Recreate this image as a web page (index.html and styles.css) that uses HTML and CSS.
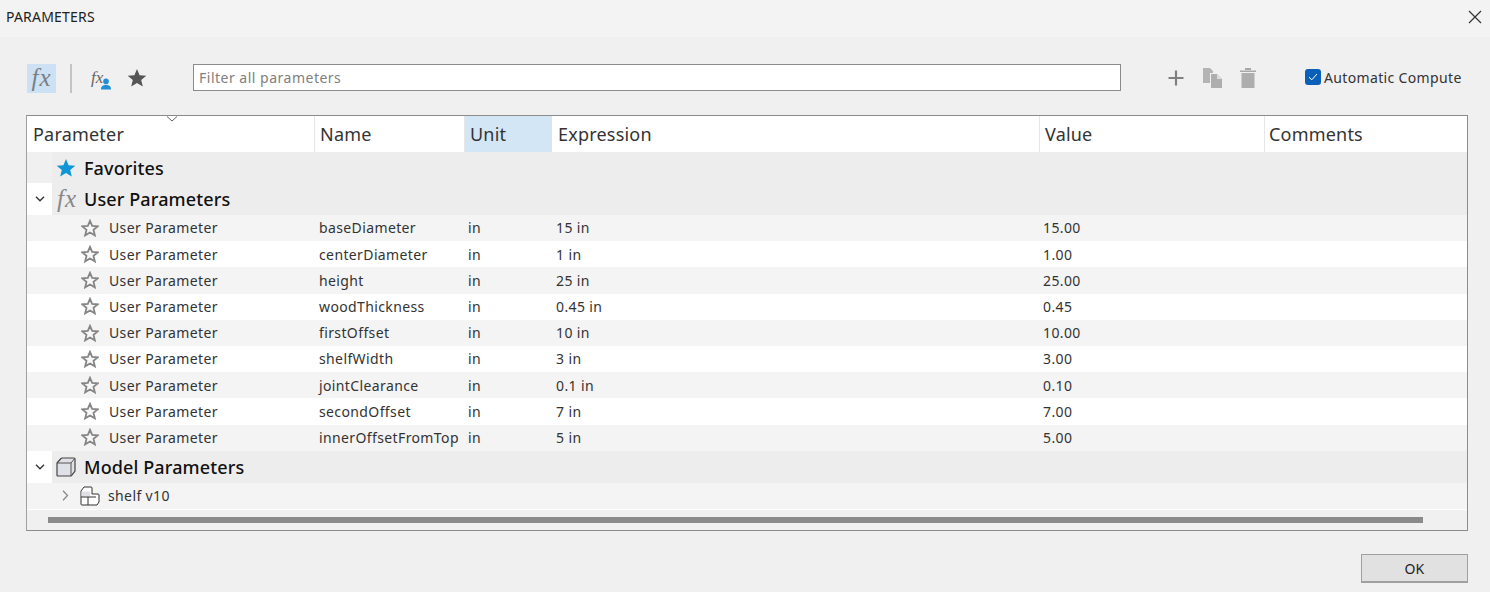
FILE: index.html
```html
<!DOCTYPE html>
<html lang="en">
  <head>
    <meta charset="UTF-8" />
    <title>Parameters</title>
    <link rel="stylesheet" href="styles.css">
  </head>
  <body>
    <div class="dialog">
      <div class="titlebar">
        <span class="title">PARAMETERS</span>
        <svg class="close" width="14" height="14" viewBox="0 0 14 14"><path d="M1 1l12 12M13 1L1 13" stroke="#333" stroke-width="1.2" fill="none"/></svg>
      </div>

      <div class="toolbar">
        <div class="fx-btn"><span class="fx">fx</span></div>
        <div class="tool-sep"></div>
        <div class="fx-user">
          <span class="fx fx-small">fx</span>
          <svg class="fx-person" width="12" height="12" viewBox="0 0 12 12"><circle cx="6" cy="3.4" r="2.8" fill="#1f8fd8"/><path d="M1 11.5c0-3.2 2-4.4 5-4.4s5 1.200 5 4.400z" fill="#1f8fd8"/></svg>
        </div>
        <svg class="star-dark" width="20" height="20" viewBox="0 0 20 20"><path d="M10 1l2.600 6.200 6.700.5-5.100 4.300 1.600 6.500L10 15l-5.800 3.500 1.600-6.500L.7 7.700l6.700-.5z" fill="#555"/></svg>
        <input class="filter" type="text" placeholder="Filter all parameters" />
        <div class="tool-actions">
          <svg width="18" height="18" viewBox="0 0 18 18"><path d="M9 1.500v15M1.500 9h15" stroke="#808080" stroke-width="2.200" fill="none"/></svg>
          <svg class="act-copy" width="22" height="22" viewBox="0 0 22 22"><path d="M1 1h7l3 3v2H8v10H1z" fill="#b4b4b4"/><path d="M9 7h6l5 5v9H9z" fill="#aeaeae"/><path d="M15 7l5 5h-5z" fill="#dcdcdc"/></svg>
          <svg width="18" height="22" viewBox="0 0 18 22"><path d="M1 3.500h16V5H1zM6 1h6v2H6z" fill="#a8a8a8"/><path d="M2.500 6h13v15h-13z" fill="#aeaeae"/></svg>
        </div>
        <label class="auto">
          <span class="check"><svg width="12" height="10" viewBox="0 0 12 10"><path d="M2 5.200l2.800 2.600L10 2" stroke="#fff" stroke-width="1" fill="none"/></svg></span>
          Automatic Compute
        </label>
      </div>

      <div class="table-box">
        <div class="row head">
          <div class="cell c-param">Parameter<svg class="sort" width="12" height="6" viewBox="0 0 12 6"><path d="M1 .5l5 4.500 5-4.500" stroke="#666" fill="none"/></svg></div>
          <div class="cell c-name">Name</div>
          <div class="cell c-unit unit-on">Unit</div>
          <div class="cell c-expr">Expression</div>
          <div class="cell c-val">Value</div>
          <div class="cell c-com">Comments</div>
        </div>

        <div class="group fav">
          <div class="gutter"></div>
          <svg class="g-icon" width="20" height="20" viewBox="0 0 20 20"><path d="M10 1l2.600 6.200 6.700.5-5.100 4.300 1.600 6.500L10 15l-5.800 3.500 1.600-6.500L.7 7.700l6.700-.5z" fill="#0f96d6"/></svg>
          <span>Favorites</span>
        </div>

        <div class="group user">
          <div class="gutter white"><svg width="10" height="6" viewBox="0 0 10 6"><path d="M1 .8l4 4 4-4" stroke="#333" stroke-width="1.400" fill="none"/></svg></div>
          <span class="fx fx-group">fx</span>
          <span>User Parameters</span>
        </div>

        <div id="params"></div>

        <div class="group model">
          <div class="gutter white"><svg width="10" height="6" viewBox="0 0 10 6"><path d="M1 .8l4 4 4-4" stroke="#333" stroke-width="1.400" fill="none"/></svg></div>
          <svg class="g-icon" width="20" height="20" viewBox="0 0 20 20"><path d="M1 6l4-4.500Q5.500 1 6 1h12q1 0 1 1v12l-3.500 4.500Q15 19 14.500 19H2q-1 0-1-1z" fill="#e0e1e6" stroke="#444" stroke-width="1.200"/><path d="M1 6h14v13M15 6l4-5" stroke="#555" fill="none"/></svg>
          <span>Model Parameters</span>
        </div>

        <div class="row comp">
          <svg class="comp-arrow" width="7" height="11" viewBox="0 0 7 11"><path d="M1 .8l4.500 4.700L1 10.200" stroke="#888" stroke-width="1.300" fill="none"/></svg>
          <svg class="comp-icon" width="20" height="20" viewBox="0 0 20 20"><path d="M1 5l3-4h7q1 0 1 1v6h6q1 0 1 1v7l-2 3H2q-1 0-1-1z" fill="#fff" stroke="#333"/><path d="M1.500 5.500h8.500v5H1.500z" fill="#dfe0e5"/><path d="M1 11h15M8 11v8" stroke="#333" fill="none"/></svg>
          <span>shelf v10</span>
        </div>

        <div class="scroll-area"><div class="scroll-thumb"></div></div>
      </div>

      <div class="footer"><button class="ok">OK</button></div>
    </div>
    <script src="params.js"></script>
  </body>
</html>
```

FILE: params.js
```js
const params = [
  ["baseDiameter", "15 in", "15.00"],
  ["centerDiameter", "1 in", "1.00"],
  ["height", "25 in", "25.00"],
  ["woodThickness", "0.45 in", "0.45"],
  ["firstOffset", "10 in", "10.00"],
  ["shelfWidth", "3 in", "3.00"],
  ["jointClearance", "0.1 in", "0.10"],
  ["secondOffset", "7 in", "7.00"],
  ["innerOffsetFromTop", "5 in", "5.00"],
];

const star =
  '<svg class="p-star" width="18" height="18" viewBox="0 0 20 20"><path d="M10 2l2.400 5.600 6.300.5-4.800 4 1.500 6.100L10 15l-5.400 3.200 1.500-6.100-4.800-4 6.300-.5z" fill="#f7f7f7" stroke="#858585" stroke-width="2"/></svg>';

document.getElementById("params").innerHTML = params
  .map(
    (p) => `<div class="row param">
      <div class="cell c-param">${star}<span>User Parameter</span></div>
      <div class="cell c-name">${p[0]}</div>
      <div class="cell c-unit">in</div>
      <div class="cell c-expr">${p[1]}</div>
      <div class="cell c-val">${p[2]}</div>
      <div class="cell c-com"></div>
    </div>`
  )
  .join("");
```

FILE: styles.css
```css
* {
  box-sizing: border-box;
  margin: 0;
  padding: 0;
}

body {
  background: #f0f0f0;
  font-family: "Noto Sans", sans-serif;
  color: #222;
  overflow: hidden;
}

.dialog {
  width: 1490px;
  height: 592px;
  display: flex;
  flex-direction: column;
}

.titlebar {
  height: 37px;
  background: #f3f3f3;
  display: flex;
  align-items: center;
  justify-content: space-between;
  padding: 0 8px 4px 6px;
  font-size: 14px;
  letter-spacing: 0.2px;
  color: #222;
}

.toolbar {
  height: 78px;
  display: flex;
  align-items: center;
  padding: 4px 28px 0 27px;
}

.fx {
  font-family: "Liberation Serif", serif;
  font-style: italic;
  color: #7a7f85;
}

.fx-btn {
  width: 29px;
  height: 29px;
  background: #cce1f3;
  display: flex;
  align-items: center;
  justify-content: center;
  font-size: 25px;
  letter-spacing: 1px;
}

.tool-sep {
  width: 2px;
  height: 29px;
  background: #c4c4c4;
  margin: 0 18px 0 14px;
}

.fx-user {
  position: relative;
  width: 22px;
  height: 24px;
}

.fx-small {
  font-size: 17px;
  color: #666;
  line-height: 20px;
  margin-left: 1px;
}

.fx-person {
  position: absolute;
  right: 0;
  bottom: 0;
}

.star-dark {
  margin-left: 15px;
}

.filter {
  width: 928px;
  height: 27px;
  margin: 0 0 2px 46px;
  border: 1px solid #8c8c8c;
  background: #fff;
  padding: 0 5px;
  font-family: "Noto Sans", sans-serif;
  font-size: 14px;
  letter-spacing: 0.5px;
}

.filter::placeholder {
  color: #808080;
  opacity: 1;
}

.tool-actions {
  display: flex;
  align-items: center;
  gap: 15px;
  margin-left: 46px;
  width: 91px;
}

.act-copy {
  margin-left: 2px;
}

.auto {
  display: flex;
  align-items: center;
  gap: 3px;
  margin: 0 0 2px 47px;
  font-size: 14px;
  letter-spacing: 0.35px;
  color: #333;
  white-space: nowrap;
}

.check {
  width: 16px;
  height: 16px;
  background: #0a5fb8;
  border-radius: 3px;
  display: flex;
  align-items: center;
  justify-content: center;
}

.table-box {
  width: 1442px;
  height: 416px;
  margin-left: 26px;
  border: 1px solid #8c8c8c;
  border-left-color: #a0a0a0;
  background: #f0f0f0;
  overflow: hidden;
}

.row {
  display: flex;
}

.cell {
  flex: none;
  white-space: nowrap;
}

.c-param { width: 288px; }
.c-name { width: 150px; }
.c-unit { width: 87px; }
.c-expr { width: 488px; }
.c-val { width: 225px; }
.c-com { width: 203px; }

.head {
  height: 36px;
  background: #fff;
  font-size: 18px;
  letter-spacing: 0.2px;
  color: #333;
}

.head .cell {
  position: relative;
  padding: 5px 0 0 5px;
  border-right: 1px solid #e6e6e6;
  line-height: 27px;
}

.head .c-param { padding-left: 6px; }

.head .unit-on {
  background: #d3e6f6;
  border-right: none;
  padding-left: 5px;
}

.head .c-expr { padding-left: 6px; }
.head .c-com { padding-left: 4px; }

.sort {
  position: absolute;
  left: 139px;
  top: 0;
}

.group {
  display: flex;
  align-items: center;
  background: #ededed;
  font-size: 18px;
  font-weight: 500;
  letter-spacing: 0.12px;
  color: #111;
}

.gutter {
  width: 25px;
  align-self: stretch;
  background: #f0f0f0;
  display: flex;
  align-items: center;
  justify-content: center;
  flex: none;
}

.gutter.white {
  background: #fff;
}

.fav {
  height: 31px;
}

.fav .g-icon {
  margin: 0 8px 0 4px;
}

.user {
  height: 32px;
}

.fx-group {
  width: 32px;
  padding-left: 5px;
  font-size: 25px;
  letter-spacing: 1px;
  color: #888;
  font-weight: 400;
}

.param {
  height: 26.2px;
  padding-bottom: 0.4px;
  font-size: 14px;
  letter-spacing: 0.38px;
  color: #333;
  align-items: center;
  background: #fff;
}

.param:nth-child(odd) {
  background: #f4f4f4;
}

.param .c-param {
  display: flex;
  align-items: center;
  padding-left: 54px;
}

.param .c-name { padding-left: 4px; }
.param .c-unit { padding-left: 3px; }
.param .c-expr { padding-left: 4px; }
.param .c-val { padding-left: 3px; }

.p-star {
  margin-right: 10px;
}

.model {
  height: 32px;
}

.model .g-icon {
  margin: 0 8px 0 4px;
}

.comp {
  height: 27px;
  background: #f4f4f4;
  border-bottom: 1px solid #fff;
  align-items: center;
  font-size: 14px;
  letter-spacing: 0.38px;
  color: #333;
}

.comp-arrow {
  margin-left: 35px;
}

.comp-icon {
  margin-left: 11px;
  margin-right: 8px;
}

.scroll-area {
  height: 20px;
  padding: 7px 0 0 21px;
}

.scroll-thumb {
  width: 1375px;
  height: 6px;
  background: #8a8a8a;
}

.footer {
  display: flex;
  justify-content: flex-end;
  padding: 23px 22px 0 0;
}

.ok {
  width: 107px;
  height: 29px;
  background: #e1e1e1;
  border: 1px solid #a0a0a0;
  border-bottom-width: 2px;
  font-family: "Noto Sans", sans-serif;
  font-size: 14px;
  letter-spacing: 0.3px;
  color: #222;
}
```
